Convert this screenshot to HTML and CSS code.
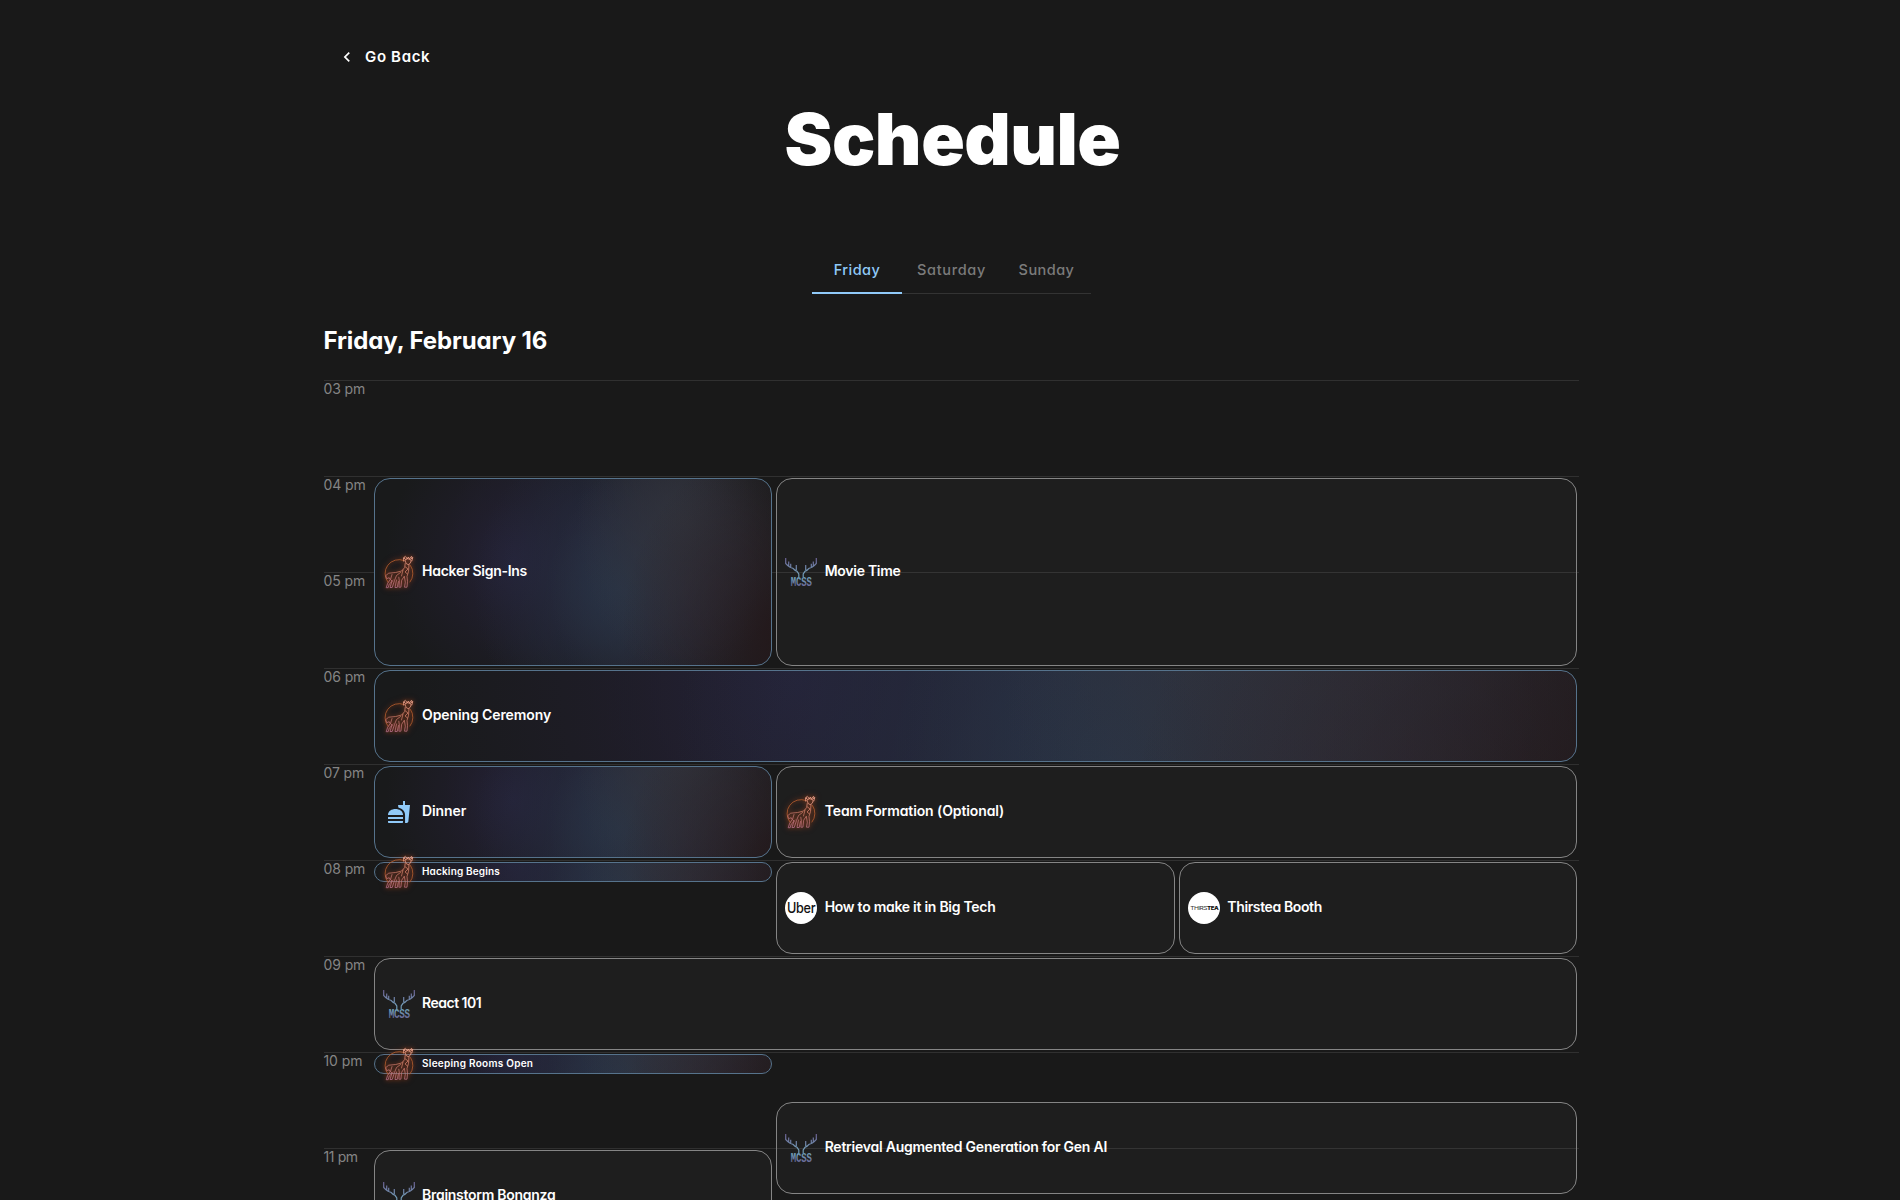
FILE: index.html
```html
<!DOCTYPE html>
<html lang="en">
<head>
<meta charset="utf-8">
<title>Schedule</title>
<link rel="stylesheet" href="styles.css">
</head>
<body>
<svg class="defs" aria-hidden="true">
  <defs>
    <linearGradient id="antler" gradientUnits="userSpaceOnUse" x1="0" y1="0" x2="0" y2="32">
      <stop offset="0.05" stop-color="#6c5f92"/><stop offset="0.5" stop-color="#7399b5"/><stop offset="0.7" stop-color="#6f9cb5"/><stop offset="1" stop-color="#6a5d92"/>
    </linearGradient>
    <linearGradient id="neon" gradientUnits="userSpaceOnUse" x1="20" y1="0" x2="10" y2="32">
      <stop offset="0" stop-color="#f09a80"/><stop offset="0.5" stop-color="#cf7b66"/><stop offset="1" stop-color="#b8708f"/>
    </linearGradient>
    <symbol id="deer" viewBox="1 0 32 32" overflow="visible">
      <g fill="none" stroke-linecap="round" stroke-linejoin="round">
        <path d="M6 26.200A14 14 0 0 1 22 4.500M28.500 9.500A14 14 0 0 1 28 26" stroke="#b9602f" stroke-width=".8"/>
        <g stroke="url(#neon)" stroke-width=".75">
          <path d="M22 2.200l1.200-2M21.700 5.200l-.2-3.500 2 1.600M30 2.200L29.600.4M29.800 5l1-3.600-2.200 1.800M24 1l1.200 2 1.100-2 1.200 2L28.800 1" stroke="#f5a890"/>
          <path d="M23 4.500l1.200 3 2 1.200 2.200-1.600.8-2.800-3-1.500z" stroke="#f0a08a"/>
          <path d="M23.200 7.500l-.5 4-3 3.500-6 1.500-7 .7-3 2.500 1 3 2.500-1 1 2-2.500 3.500-1.500 4.500h2l1-3.500 4-4"/>
          <path d="M27 8.500l-.5 7-1.500 5 .5 5-.5 5.700h-2.500l.8-5-1-6-2.600 4-.8 7h-2l.5-6-.6-4"/>
          <path d="M10 18.500l-1.500 5 1.500 1.500-2 6.500h2.200l2.300-7 2-5 4-3M14.500 24l-1.500 7.500h2.200l1.300-6M21 14l-1.500 6M23.500 11l2.500 2-3 3 2.500 2"/>
        </g>
      </g>
    </symbol>
    <symbol id="mcss" viewBox="0 0 32 32">
      <g fill="none" stroke="url(#antler)" stroke-width="1.200">
        <path d="M.7 2v5.500l2 2 2 1.500 3.500 1.500 2 2 1.800.8 1.800 2.700v3M3.700 5.500v4.500M5.700 7.700V12M11.300 9v4.500l-1 1.500"/>
        <path d="M31.300 2v5.500l-2 2-2 1.500-3.500 1.500-2 2-1.800.8-1.800 2.700v3M28.300 5.500v4.500M26.300 7.700V12M20.700 9v4.500l1 1.500"/>
      </g>
      <text x="5.800" y="29.800" textLength="20.800" lengthAdjust="spacingAndGlyphs" class="mcss-text" fill="url(#antler)">MCSS</text>
    </symbol>
    <symbol id="fastfood" viewBox="0 0 24 24">
      <path fill="#90caf9" d="M18.060 22.990h1.660c.84 0 1.530-.64 1.630-1.460L23 5.050h-5V1h-1.970v4.050h-4.970l.3 2.340c1.710.47 3.310 1.320 4.270 2.260 1.440 1.420 2.430 2.890 2.430 5.290v8.050zM1 21.990V21h15.030v.99c0 .55-.45 1-1.010 1H2.010c-.56 0-1.010-.45-1.010-1zm15.030-7c0-8-15.030-8-15.030 0h15.030zM1.020 17h15v2h-15z"/>
    </symbol>
  </defs>
</svg>

<main class="page">
  <a class="back">
    <svg class="chevron" viewBox="0 0 24 24"><path fill="#fff" d="M15.410 7.410 14 6l-6 6 6 6 1.410-1.410L10.830 12z"/></svg>
    <span>Go Back</span>
  </a>
  <h1 class="title">Schedule</h1>
  <nav class="tabs">
    <a class="tab tab-active">Friday</a>
    <a class="tab tab-saturday">Saturday</a>
    <a class="tab tab-sunday">Sunday</a>
  </nav>
  <h2 class="day">Friday, February 16</h2>

  <section class="grid">
    <div class="hour h15">03 pm</div>
    <div class="hour h16">04 pm</div>
    <div class="hour h17">05 pm</div>
    <div class="hour h18">06 pm</div>
    <div class="hour h19">07 pm</div>
    <div class="hour h20">08 pm</div>
    <div class="hour h21">09 pm</div>
    <div class="hour h22">10 pm</div>
    <div class="hour narrow h23">11 pm</div>

    <article class="event main signins"><svg class="icon glow"><use href="#deer"/></svg><span>Hacker Sign-Ins</span></article>
    <article class="event movie"><svg class="icon"><use href="#mcss"/></svg><span>Movie Time</span></article>
    <article class="event main wide opening"><svg class="icon glow"><use href="#deer"/></svg><span>Opening Ceremony</span></article>
    <article class="event main wide dinner"><svg class="icon food"><use href="#fastfood"/></svg><span>Dinner</span></article>
    <article class="event wide team"><svg class="icon glow"><use href="#deer"/></svg><span>Team Formation (Optional)</span></article>
    <article class="event bigtech"><svg class="icon" viewBox="0 0 32 32"><circle cx="16" cy="16" r="16" fill="#fff"/><text x="1.900" y="21" textLength="28.500" lengthAdjust="spacingAndGlyphs" class="uber">Uber</text></svg><span>How to make it in Big Tech</span></article>
    <article class="event tight thirstea"><svg class="icon" viewBox="0 0 32 32"><circle cx="16" cy="16" r="16" fill="#fff"/><text x="2.300" y="17.800" textLength="16.700" lengthAdjust="spacingAndGlyphs" class="tea">THIRS</text><text x="19" y="17.800" textLength="11.300" lengthAdjust="spacingAndGlyphs" class="tea tea-bold">TEA</text></svg><span>Thirstea Booth</span></article>
    <article class="event react"><svg class="icon"><use href="#mcss"/></svg><span>React 101</span></article>
    <article class="event retrieval"><svg class="icon"><use href="#mcss"/></svg><span>Retrieval Augmented Generation for Gen AI</span></article>
    <article class="event brainstorm"><svg class="icon"><use href="#mcss"/></svg><span>Brainstorm Bonanza</span></article>
    <article class="event main small hacking"><svg class="icon glow"><use href="#deer"/></svg><span>Hacking Begins</span></article>
    <article class="event main small sleeping"><svg class="icon glow"><use href="#deer"/></svg><span>Sleeping Rooms Open</span></article>
  </section>
</main>
</body>
</html>
```
FILE: styles.css
```css
* { box-sizing: border-box; margin: 0; }
body {
  height: 100vh;
  overflow: hidden;
  background: #191919;
  color: #fff;
  font: 500 14px/20px Inter, sans-serif;
  font-feature-settings: "cv11";
}
.defs { display: block; width: 0; height: 0; }
.page {
  display: flex;
  flex-direction: column;
  width: 1256px;
  margin-left: 323.500px;
  padding-top: 37px;
}
.back {
  display: flex;
  align-items: center;
  gap: 8px;
  height: 40px;
  padding-left: 13.500px;
  font-size: 15px;
  font-weight: 600;
  letter-spacing: .65px;
}
.chevron { width: 20px; height: 20px; }
.title {
  margin-top: 26px;
  padding-left: 2px;
  font-size: 72px;
  line-height: 72px;
  font-weight: 900;
  letter-spacing: -.5px;
  text-align: center;
}
.tabs {
  display: flex;
  align-self: center;
  width: 279px;
  height: 48px;
  margin-top: 71px;
  box-shadow: inset 0 -1px #333;
}
.tab {
  flex: 0 0 91px;
  height: 48px;
  line-height: 48px;
  text-align: center;
  color: #7b7b7b;
  font-size: 14.500px;
  letter-spacing: .45px;
}
.tab-active {
  flex-basis: 90px;
  border-bottom: 2px solid #90caf9;
  color: #90caf9;
}
.tab-saturday { flex-basis: 99px; letter-spacing: .65px; }
.day { margin-top: 29px; font-size: 24px; line-height: 36px; font-weight: 700; letter-spacing: -.1px; }

.grid {
  display: grid;
  grid-template-columns: 48px repeat(3, 1fr);
  grid-template-rows: repeat(36, 24px);
  margin-top: 21px;
}
.hour {
  grid-column: 1 / -1;
  border-top: 1px solid #303030;
  color: #858585;
  font-weight: 400;
  line-height: 16px;
  letter-spacing: -.1px;
}
.narrow { letter-spacing: -.4px; }
.h15 { grid-row: 1 / span 4; }
.h16 { grid-row: 5 / span 4; }
.h17 { grid-row: 9 / span 4; }
.h18 { grid-row: 13 / span 4; }
.h19 { grid-row: 17 / span 4; }
.h20 { grid-row: 21 / span 4; }
.h21 { grid-row: 25 / span 4; }
.h22 { grid-row: 29 / span 4; }
.h23 { grid-row: 33 / span 4; }

.event {
  display: flex;
  align-items: center;
  gap: 7.500px;
  min-height: 0;
  margin: 2px;
  padding: 0 8px;
  border: 1px solid #858585;
  border-radius: 16px;
  background: rgba(255, 255, 255, .025);
  font-weight: 600;
  letter-spacing: -.27px;
}
.event span { padding-bottom: 2px; }
.wide { letter-spacing: -.1px; }
.tight { letter-spacing: -.38px; }
.main {
  --art: 399px;
  border-color: #56738c;
  background-color: #191a1b;
  background-image:
    radial-gradient(42% 50% at 104% 66%, rgba(36, 23, 25, .9) 0, rgba(36, 23, 25, .55) 30%, rgba(36, 23, 25, 0) 100%),
    radial-gradient(27% 38% at 78% 38%, rgba(51, 53, 61, .8) 0, rgba(51, 52, 60, .5) 45%, rgba(50, 50, 58, 0) 100%),
    radial-gradient(36% 40% at 61% 54%, rgba(40, 54, 73, .8) 0, rgba(39, 48, 68, .4) 50%, rgba(39, 48, 68, 0) 100%),
    radial-gradient(34% 36% at 78% 54%, rgba(52, 50, 64, .9) 0, rgba(50, 46, 58, 0) 100%),
    radial-gradient(32% 36% at 35% 47%, rgba(37, 34, 57, .9) 0, rgba(35, 31, 50, .6) 40%, rgba(30, 26, 34, 0) 100%),
    radial-gradient(40% 40% at 58% 45%, rgba(36, 40, 60, .8) 0, rgba(36, 40, 60, 0) 100%);
  background-size: var(--art) var(--art);
  background-position: center;
}
.small { padding-right: 0; font-size: 10px; font-weight: 600; letter-spacing: .16px; line-height: 14px; }

.signins { grid-area: 5 / 2 / span 8 / span 1; }
.movie { grid-area: 5 / 3 / span 8 / span 2; }
.opening { --art: 1204px; grid-area: 13 / 2 / span 4 / span 3; }
.dinner { grid-area: 17 / 2 / span 4 / span 1; }
.team { grid-area: 17 / 3 / span 4 / span 2; }
.hacking { grid-area: 21 / 2 / span 1 / span 1; }
.bigtech { grid-area: 21 / 3 / span 4 / span 1; }
.thirstea { grid-area: 21 / 4 / span 4 / span 1; }
.react { grid-area: 25 / 2 / span 4 / span 3; letter-spacing: -.5px; }
.sleeping { grid-area: 29 / 2 / span 1 / span 1; letter-spacing: .26px; }
.retrieval { grid-area: 31 / 3 / span 4 / span 2; letter-spacing: -.24px; }
.brainstorm { grid-area: 33 / 2 / span 4 / span 1; }

.icon { flex: none; width: 32px; height: 32px; overflow: visible; }
.food { width: 24px; height: 24px; margin: 0 4px; }
.glow { filter: drop-shadow(0 0 2px rgba(226, 88, 34, .65)) drop-shadow(0 0 3px rgba(200, 70, 20, .3)); }
.mcss-text { font: 700 13px "Liberation Mono", monospace; }
.uber { font: 500 14px Inter, sans-serif; fill: #111; }
.tea { font: 400 5px Inter, sans-serif; fill: #333; }
.tea-bold { font-weight: 800; fill: #111; }
```
